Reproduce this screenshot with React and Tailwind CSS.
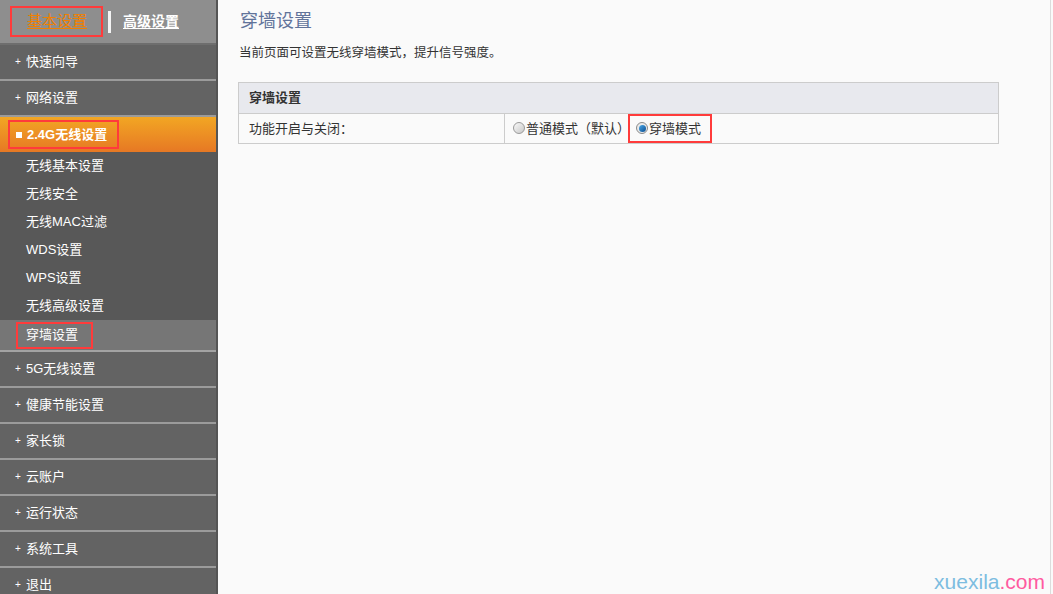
import React from 'react';

const font = { fontFamily: '"Liberation Sans", "Noto Sans CJK SC", sans-serif' };

const topItems = ['快速向导', '网络设置'];
const subItems = ['无线基本设置', '无线安全', '无线MAC过滤', 'WDS设置', 'WPS设置', '无线高级设置'];
const bottomItems = ['5G无线设置', '健康节能设置', '家长锁', '云账户', '运行状态', '系统工具', '退出'];

const MenuItem = ({ label }) => (
  <div className="h-[36px] shrink-0 flex items-center bg-[#636363] border-b-2 border-[#9b9b9b] text-white text-[13px]">
    <span className="w-[26px] pl-[15px] text-[10px] leading-none">+</span>
    <span>{label}</span>
  </div>
);

const App = () => {
  return (
    <div className="h-[594px] w-full flex overflow-hidden bg-[#fafafa]" style={font}>
      {/* Sidebar */}
      <div className="w-[218px] shrink-0 flex flex-col bg-[#636363] border-r-2 border-[#555]">
        <div className="h-[45px] shrink-0 bg-[#8e8e8e] border-b-2 border-[#6e6e6e] flex items-center pl-[10px]">
          <div className="border-2 border-[#ff3b3b] w-[93px] h-[31px] flex items-center pl-[15px]">
            <span className="text-[#f08000] text-[15px] underline underline-offset-2">基本设置</span>
          </div>
          <div className="w-[3px] h-[22px] bg-[#f4f4f4] ml-[5px] mr-[12px]"></div>
          <span className="text-white text-[14px] font-bold underline underline-offset-2">高级设置</span>
        </div>
        {topItems.map(t => <MenuItem key={t} label={t} />)}
        <div className="h-[35px] shrink-0 flex items-center bg-gradient-to-b from-[#f2a623] to-[#e67824] pl-[8px]">
          <div className="border-2 border-[#ff3b3b] w-[111px] h-[29px] flex items-center text-white text-[13px] font-bold">
            <span className="w-[6px] h-[6px] bg-white ml-[6px] mr-[5px]"></span>
            <span>2.4G无线设置</span>
          </div>
        </div>
        <div className="bg-[#585858] shrink-0">
          {subItems.map(t => (
            <div key={t} className="h-[28px] flex items-center pl-[26px] text-white text-[13px]">{t}</div>
          ))}
        </div>
        <div className="h-[32px] shrink-0 bg-[#767676] border-b-2 border-[#a3a3a3] flex items-center pl-[16px]">
          <div className="border-2 border-[#ff3b3b] w-[77px] h-[27px] flex items-center pl-[8px] text-white text-[13px]">穿墙设置</div>
        </div>
        {bottomItems.map(t => <MenuItem key={t} label={t} />)}
      </div>

      {/* Main */}
      <div className="flex-1 relative pl-[20px] pr-[52px]">
        <h1 className="text-[18px] text-[#61739a] mt-[9px] ml-[2px] leading-[24px]">穿墙设置</h1>
        <p className="text-[12.5px] text-[#333] mt-[11px] ml-[1px]">当前页面可设置无线穿墙模式，提升信号强度。</p>
        <div className="mt-[19px] w-[761px] border border-[#cccccc] text-[13px] text-[#333]">
          <div className="h-[31px] bg-[#e8e9ee] border-b border-[#cccccc] flex items-center pl-[10px] font-bold">穿墙设置</div>
          <div className="h-[29px] flex items-stretch">
            <div className="w-[266px] border-r border-[#cccccc] flex items-center pl-[10px]">功能开启与关闭：</div>
            <div className="flex items-center pl-[8px]">
              <span className="w-[12px] h-[12px] rounded-full border border-[#9a9a9a] bg-gradient-to-br from-[#fafafa] to-[#c8c8c8] mr-[1px]"></span>
              <span>普通模式（默认）</span>
              <div className="border-2 border-[#ff3b3b] h-[29px] w-[84px] flex items-center pl-[6px] -ml-[2px]">
                <span className="w-[12px] h-[12px] rounded-full border border-[#8a8a8a] bg-[#eaeaea] flex items-center justify-center mr-[1px]">
                  <span className="w-[7px] h-[7px] rounded-full bg-gradient-to-br from-[#4aa8e8] to-[#0a4e90]"></span>
                </span>
                <span>穿墙模式</span>
              </div>
            </div>
          </div>
        </div>
        <div className="absolute right-[8px] bottom-[2px] text-[21px] leading-none" style={{ fontFamily: '"Liberation Sans", sans-serif' }}>
          <span className="text-[#7dbde0]">xuexila</span><span className="text-[#ff5aa0]">.com</span>
        </div>
        <div className="absolute right-0 top-0 bottom-0 w-[3px] border-l border-[#dcdcdc]"></div>
      </div>
    </div>
  );
};

export default App;
